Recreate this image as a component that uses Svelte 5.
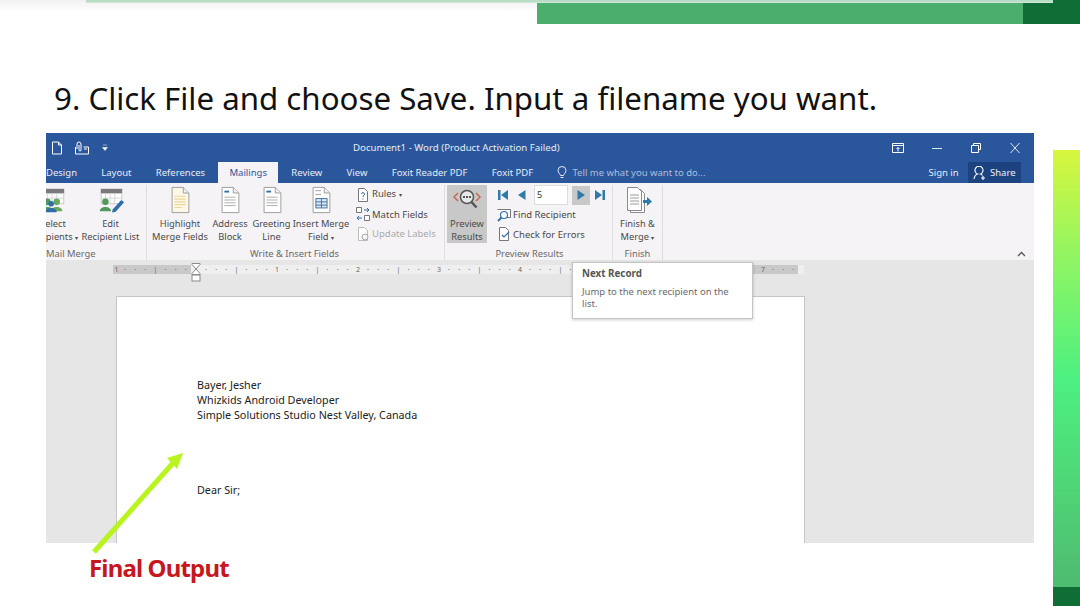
<script>
	const tabs = ['Design', 'Layout', 'References', 'Mailings', 'Review', 'View', 'Foxit Reader PDF', 'Foxit PDF'];
	// 81px to the inch, one cell per eighth; the tooltip hides cells 46 to 63
	const ruler = Array.from({ length: 68 }, (_, i) => {
		if (i === 0) return '1';
		if (i === 8 || (i >= 46 && i <= 63)) return '';
		if (i % 8 === 0) return String(i / 8 - 1);
		return i % 4 === 0 ? '|' : '·';
	});
</script>

{#snippet paper(kind)}
	<svg class="big-icon" viewBox="0 0 30 30" width="30" height="28">
		<path d="M6.5 1.5h12l6 6v21h-18z" fill={kind === 'highlight' ? '#fdf8e6' : '#fff'} stroke="#9a9a9a" />
		<path d="M18.5 1.5v6h6" fill="#f0f0f0" stroke="#9a9a9a" />
		{#if kind === 'highlight'}
			<path d="M9 11h12M9 14h12M9 17h12M9 20h12M9 23h8" stroke="#edd79c" stroke-width="1.2" />
		{:else if kind === 'merge'}
			<path d="M9 5h6M9 9h6" stroke="#9a9a9a" />
			<rect x="9.5" y="13.5" width="12" height="10" fill="#dbe7f4" stroke="#41719c" />
			<path d="M9.5 17h12M9.5 20.500h12M15.500 13.500v10" stroke="#41719c" />
		{:else}
			<path d="M9 6h5" stroke="#2f6ea8" stroke-width="2" />
			<path d="M9 12h12M9 15h12M9 18h12M9 21h12" stroke="#a9a9a9" />
		{/if}
	</svg>
{/snippet}

{#snippet people(edit)}
	<svg class="big-icon" viewBox="0 0 30 30" width="30" height="28">
		<rect x="4" y="3" width="23" height="5" fill="#7b7b7b" />
		<rect x="4.500" y="8" width="22" height="11" fill="#fff" stroke="#c9c9c9" />
		<path d="M9 8v11M14 8v11M19 8v11M4 13h23" stroke="#d5d5d5" />
		<circle cx="9" cy="17" r="3.500" fill="#4f9a5a" />
		<path d="M3 27c0-6 12-6 12 0z" fill="#4f9a5a" />
		{#if edit}
			<path d="M17 25l9-10 3 2.500-9 10-4 1z" fill="#2f6ea8" />
		{:else}
			<circle cx="19" cy="17" r="3.500" fill="#6aaa5e" />
			<path d="M13 27c0-6 12-6 12 0z" fill="#6aaa5e" />
			<circle cx="13" cy="19" r="3" fill="#2f6ea8" />
			<path d="M7 28c0-6 12-6 12 0z" fill="#2f6ea8" />
		{/if}
	</svg>
{/snippet}

<div class="slide">
	<div class="deco">
		<div class="hairline"></div>
		<div class="bar-green"></div>
		<div class="bar-dark"></div>
	</div>

	<h1>9. Click File and choose Save. Input a filename you want.</h1>

	<div class="content">
		<div class="left">
			<div class="window">
				<div class="titlebar">
					<div class="qat">
						<svg viewBox="0 0 12 14" width="12" height="14"><path d="M1.500 1h6l3 3v9h-9zM7.500 1v3h3" fill="none" stroke="#fff" /></svg>
						<svg viewBox="0 0 16 14" width="16" height="14"><path d="M3 8V3a2 2 0 0 1 4 0v6a1 1 0 0 1-2 0V4M1.500 6v7h13V6h-5M10 8h3" fill="none" stroke="#fff" /></svg>
						<svg class="qat-more" viewBox="0 0 6 7" width="6" height="7"><path d="M1 1h4M0.500 3.500h5l-2.500 3z" fill="#fff" stroke="#fff" stroke-width="0.500" /></svg>
					</div>
					<div class="doc-title">Document1 - Word (Product Activation Failed)</div>
					<div class="win-controls">
						<svg viewBox="0 0 12 10" width="12" height="10"><path d="M.5.500h11v9H.5zM.5 2.500h11M6 4.500v4M4.500 6L6 4.500 7.500 6" fill="none" stroke="#fff" /></svg>
						<svg viewBox="0 0 12 10" width="12" height="10"><path d="M1 5.500h10" stroke="#dfe7f3" /></svg>
						<svg viewBox="0 0 12 10" width="12" height="10"><path d="M3.500 2.500V.500h7v6h-2M1.500 2.500h7v7h-7z" fill="none" stroke="#fff" /></svg>
						<svg viewBox="0 0 12 10" width="12" height="10"><path d="M1.500 0l9 10M10.500 0l-9 10" stroke="#dfe7f3" /></svg>
					</div>
				</div>

				<div class="tabbar">
					{#each tabs as tab}
						<span class="tab" class:active={tab === 'Mailings'}>{tab}</span>
					{/each}
					<span class="tell">
						<svg viewBox="0 0 10 13" width="10" height="13"><path d="M3.500 9.500C3 7.500 1 7 1 4.500a4 4 0 0 1 8 0C9 7 7 7.500 6.500 9.500zM3.500 11.500h3" fill="none" stroke="#e4ebf6" /></svg>
						Tell me what you want to do...
					</span>
					<span class="signin">Sign in</span>
					<span class="share">
						<svg viewBox="0 0 14 14" width="14" height="14"><path d="M1 13c.5-3 2-4.500 3.500-5a4 4 0 1 1 3 0c.8.300 1.500.800 2 1.500M10 10v4M8 12h4" fill="none" stroke="#fff" stroke-width="1.100" /></svg>
						Share
					</span>
				</div>

				<div class="ribbon">
					<section class="group mail">
						<div class="group-body">
							<div class="big select">
								{@render people(false)}
								<span>Select<br />Recipients <i>▾</i></span>
							</div>
							<div class="big w-edit">
								{@render people(true)}
								<span>Edit<br />Recipient List</span>
							</div>
						</div>
						<div class="group-label">Mail Merge</div>
					</section>

					<section class="group write">
						<div class="group-body">
							<div class="big w-58">
								{@render paper('highlight')}
								<span>Highlight<br />Merge Fields</span>
							</div>
							<div class="big w-42">
								{@render paper('address')}
								<span>Address<br />Block</span>
							</div>
							<div class="big w-41">
								{@render paper('greeting')}
								<span>Greeting<br />Line</span>
							</div>
							<div class="big w-58">
								{@render paper('merge')}
								<span>Insert Merge<br />Field <i>▾</i></span>
							</div>
							<div class="small-col rules">
								<div class="small">
									<svg viewBox="0 0 14 14" width="14" height="14"><path d="M2.500.500h6l3 3v10h-9z" fill="#fff" stroke="#777" /><path d="M5.500 6a1.500 1.500 0 1 1 2 1.500L7 9M7 10.500v1" fill="none" stroke="#2f6ea8" /></svg>
									<span>Rules <i>▾</i></span>
								</div>
								<div class="small">
									<svg viewBox="0 0 14 14" width="14" height="14"><path d="M.5.500h5v5h-5zM8.500 8.500h5v5h-5z" fill="#fff" stroke="#777" /><path d="M8 3h5M11 1l2 2-2 2M6 11H1M3 9l-2 2 2 2" fill="none" stroke="#2f6ea8" /></svg>
									<span>Match Fields</span>
								</div>
								<div class="small disabled">
									<svg viewBox="0 0 14 14" width="14" height="14"><path d="M2.500.500h6l3 3v10h-9z" fill="#fff" stroke="#bbb" /><circle cx="9" cy="10" r="3" fill="#f6f3f6" stroke="#aaa" /></svg>
									<span>Update Labels</span>
								</div>
							</div>
						</div>
						<div class="group-label write-label">Write &amp; Insert Fields</div>
					</section>

					<section class="group preview">
						<div class="group-body">
							<div class="big preview-btn">
								<svg class="big-icon" viewBox="0 0 30 28" width="32" height="28">
									<path d="M6 7l-4 4 4 4M24 7l4 4-4 4" stroke="#c8674a" stroke-width="1.500" fill="none" />
									<circle cx="15" cy="11" r="6.500" fill="#e8e8e8" stroke="#555" stroke-width="1.500" />
									<path d="M19.500 16l5 5.500" stroke="#555" stroke-width="2.500" />
									<path d="M11 11h8" stroke="#555" stroke-width="2" stroke-dasharray="2 1" />
								</svg>
								<span>Preview<br />Results</span>
							</div>
							<div class="small-col nav-col">
								<div class="nav-row">
									<svg viewBox="0 0 12 12" width="12" height="12"><path d="M1 1h2.500v10H1zM11 1v10L4 6z" fill="#2f7ba8" /></svg>
									<svg viewBox="0 0 9 12" width="9" height="12"><path d="M8.500 1v10L1 6z" fill="#2f7ba8" /></svg>
									<span class="record">5</span>
									<span class="next-box"><svg viewBox="0 0 9 12" width="9" height="12"><path d="M.5 1v10L8 6z" fill="#2f7ba8" /></svg></span>
									<svg viewBox="0 0 12 12" width="12" height="12"><path d="M11 1H8.500v10H11zM1 1v10l7-5z" fill="#2f7ba8" /></svg>
								</div>
								<div class="small">
									<svg viewBox="0 0 14 14" width="14" height="14"><path d="M.5 1.500h13v8H8" fill="#fff" stroke="#777" /><circle cx="7" cy="7" r="3.500" fill="#fff" stroke="#2f6ea8" stroke-width="1.200" /><path d="M4.500 9.500L1 13" stroke="#2f6ea8" stroke-width="1.800" /></svg>
									<span>Find Recipient</span>
								</div>
								<div class="small">
									<svg viewBox="0 0 14 14" width="14" height="14"><path d="M2.500.500h6l3 3v10h-9z" fill="#fff" stroke="#777" /><path d="M5 8l2 2 5-5" fill="none" stroke="#2f6ea8" stroke-width="1.200" /></svg>
									<span>Check for Errors</span>
								</div>
							</div>
						</div>
						<div class="group-label">Preview Results</div>
					</section>

					<section class="group finish">
						<div class="group-body">
							<div class="big w-49">
								<svg class="big-icon" viewBox="0 0 30 28" width="30" height="28">
									<path d="M7.500 3.500h10l4 4v19h-14z" fill="#fff" stroke="#8a8a8a" />
									<path d="M4.500 1.500h10l4 4v19h-14z" fill="#fff" stroke="#8a8a8a" />
									<path d="M7 9h9M7 12h9M7 15h9M7 18h9" stroke="#9a9a9a" />
									<path d="M20 14h4v-3l5 4.500-5 4.500v-3h-4z" fill="#2f7ba8" />
								</svg>
								<span>Finish &amp;<br />Merge <i>▾</i></span>
							</div>
						</div>
						<div class="group-label">Finish</div>
					</section>

					<svg class="collapse" viewBox="0 0 9 6" width="9" height="6"><path d="M1 5l3.500-3.500L8 5" fill="none" stroke="#555" stroke-width="1.300" /></svg>
				</div>

				<div class="workspace">
					<div class="ruler">
						{#each ruler as mark, i}
							<span class="mark" class:shaded={i < 8 || i > 45}>{mark}</span>
						{/each}
					</div>
					<div class="page">
						<p>Bayer, Jesher</p>
						<p>Whizkids Android Developer</p>
						<p>Simple Solutions Studio Nest Valley, Canada</p>
						<p class="salutation">Dear Sir;</p>
					</div>

					<svg class="indent" viewBox="0 0 10 19" width="10" height="19">
						<path d="M1 .5h8v1L5 6l-4-4.500zM1 11.500v-1L5 6l4 4.500v1z" fill="#fff" stroke="#8a8a8a" />
						<rect x="1" y="12" width="8" height="6" fill="#fff" stroke="#8a8a8a" />
					</svg>

					<div class="tooltip">
						<strong>Next Record</strong>
						<p>Jump to the next recipient on the list.</p>
					</div>
				</div>
			</div>

			<div class="caption">Final Output</div>
		</div>

		<div class="sidebar"></div>
	</div>

	<svg class="arrow" viewBox="0 0 100 110" width="100" height="110">
		<path d="M5 103L84 14" stroke="#b9f41f" stroke-width="5" />
		<path d="M94 4L78 9 88 20z" fill="#b9f41f" />
	</svg>
</div>

<style>
	:global(body) {
		margin: 0;
		background: #fff;
	}
	.slide {
		position: relative;
		width: 1080px;
		height: 606px;
		overflow: hidden;
		background: #fff;
		font-family: 'Noto Sans', sans-serif;
	}
	.deco {
		position: relative;
		display: flex;
		justify-content: flex-end;
		height: 24px;
		background: linear-gradient(#f1f1f1, #fff 12px);
	}
	.hairline {
		position: absolute;
		left: 86px;
		top: 0;
		width: 967px;
		height: 2px;
		background: #b9dcc4;
		border-bottom: 1px solid #cfe7d6;
	}
	.bar-green {
		width: 486px;
		margin-top: 3px;
		background: #4bae6d;
	}
	.bar-dark {
		width: 57px;
		background: #0f6e35;
	}
	h1 {
		margin: 52px 0 0 54px;
		font-size: 31.250px;
		line-height: 44px;
		font-weight: 400;
		color: #111;
		white-space: nowrap;
	}
	.content {
		display: flex;
		margin-top: 13px;
	}
	.left {
		margin-left: 46px;
		width: 988px;
	}
	.sidebar {
		width: 27px;
		height: 456px;
		margin: 17px 0 0 19px;
		background: linear-gradient(
			#0f6e35 0 0
		) bottom / 100% 19px no-repeat, linear-gradient(#d8f63e 0%, #8ff563 24%, #4df081 50%, #4fd877 72%, #4fb56f 100%);
	}
	.window {
		height: 410px;
		display: flex;
		flex-direction: column;
		background: #e6e6e6;
	}
	.titlebar {
		display: flex;
		align-items: center;
		height: 29px;
		background: #2a569c;
		color: #f2f5fa;
	}
	.qat {
		display: flex;
		align-items: center;
		gap: 11px;
		width: 302px;
		margin-left: 5px;
	}
	.qat-more {
		margin-left: 1px;
	}
	.doc-title {
		font-size: 9.700px;
		color: #e4ebf6;
		white-space: nowrap;
	}
	.win-controls {
		display: flex;
		gap: 27px;
		margin-left: auto;
		margin-right: 13px;
		align-items: center;
	}
	.tabbar {
		display: flex;
		align-items: center;
		gap: 24.300px;
		height: 21px;
		background: #2a569c;
		font-size: 9.500px;
		color: #e8edf6;
	}
	.tab {
		white-space: nowrap;
	}
	.tab.active {
		align-self: stretch;
		display: flex;
		align-items: center;
		padding: 0 11px;
		margin: 0 -11px;
		background: #f6f3f6;
		color: #2a569c;
	}
	.tell {
		display: flex;
		align-items: center;
		gap: 5px;
		color: #aebfda;
		white-space: nowrap;
	}
	.signin {
		margin-left: auto;
		margin-right: -15px;
		white-space: nowrap;
	}
	.share {
		align-self: stretch;
		display: flex;
		align-items: center;
		gap: 3px;
		width: 53px;
		box-sizing: border-box;
		padding-left: 5px;
		margin-right: 13px;
		background: #1c4380;
		color: #eef2f8;
		white-space: nowrap;
	}
	.ribbon {
		display: flex;
		height: 77px;
		flex: none;
		overflow: hidden;
		background: #f6f3f6;
		font-size: 9.500px;
		line-height: 13px;
		color: #4a4a4a;
	}
	.group {
		display: flex;
		flex-direction: column;
		box-sizing: border-box;
		border-right: 1px solid #e0dde0;
		margin-top: 2px;
	}
	.group-body {
		flex: 1;
		display: flex;
		min-height: 0;
	}
	.group-label {
		height: 14px;
		text-align: center;
		font-size: 9.400px;
		line-height: 15px;
		color: #6a6a6a;
	}
	.write-label {
		padding-right: 6px;
	}
	.mail {
		width: 101px;
	}
	.mail .group-label {
		text-align: left;
	}
	.write {
		width: 298px;
		padding-left: 4px;
	}
	.preview {
		width: 168px;
		padding-left: 2px;
	}
	.finish {
		width: 50px;
	}
	.big {
		display: flex;
		flex-direction: column;
		align-items: center;
		flex: none;
		font-size: 9.300px;
		text-align: center;
		white-space: nowrap;
	}
	.big span {
		margin-top: 3px;
	}
	.big i,
	.small i {
		font-style: normal;
		font-size: 6px;
	}
	.big-icon {
		flex: none;
		margin-top: 1px;
	}
	.select {
		width: 52px;
		margin-left: -19px;
	}
	.w-edit {
		width: 63px;
	}
	.w-58 {
		width: 58px;
	}
	.w-42 {
		width: 42px;
	}
	.w-41 {
		width: 41px;
	}
	.w-49 {
		width: 49px;
	}
	.preview-btn {
		width: 40px;
		height: 58px;
		background: #c8c8c8;
	}
	.small-col {
		display: flex;
		flex-direction: column;
		white-space: nowrap;
	}
	.rules {
		margin-left: 6px;
	}
	.nav-col {
		margin-left: 10px;
	}
	.small {
		display: flex;
		align-items: center;
		gap: 2px;
		height: 19.500px;
	}
	.disabled {
		color: #aaa;
	}
	.nav-row {
		display: flex;
		align-items: center;
		height: 20px;
		width: 109px;
		gap: 8px;
	}
	.record {
		width: 34px;
		height: 20px;
		box-sizing: border-box;
		border: 1px solid #ddd;
		margin-right: -4px;
		padding-left: 2px;
		background: #fff;
		line-height: 18px;
		font-size: 9px;
		color: #333;
	}
	.next-box {
		display: flex;
		align-items: center;
		justify-content: center;
		width: 18px;
		height: 19px;
		margin-right: -4px;
		background: #c8c8c8;
	}
	.collapse {
		margin: auto 8px 3px auto;
	}
	.workspace {
		position: relative;
		flex: 1;
		min-height: 0;
		overflow: hidden;
	}
	.ruler {
		display: flex;
		width: 691px;
		height: 9px;
		margin: 5px 0 0 67px;
		overflow: hidden;
		background: #efefef;
	}
	.mark {
		flex: 0 0 10.125px;
		text-align: center;
		font-size: 7px;
		line-height: 9px;
		color: #666;
	}
	.mark:first-child {
		flex-basis: 7px;
	}
	.mark.shaded {
		background: #c9c9c9;
	}
	.page {
		box-sizing: border-box;
		width: 689px;
		height: 300px;
		margin: 22px 0 0 70px;
		padding: 81px 0 0 80px;
		background: #fff;
		border: 1px solid #c6c6c6;
		border-bottom: 0;
		font-size: 10.750px;
		line-height: 15px;
		color: #222;
	}
	.page p {
		margin: 0;
	}
	.page .salutation {
		margin-top: 60px;
	}
	.indent {
		position: absolute;
		left: 145px;
		top: 3px;
	}
	.tooltip {
		position: absolute;
		left: 526px;
		top: 2px;
		box-sizing: border-box;
		width: 181px;
		height: 57px;
		padding: 5px 18px 0 9px;
		background: #fff;
		border: 1px solid #c4c4c4;
		box-shadow: 0 1px 3px rgba(0, 0, 0, 0.2);
		font-size: 9.500px;
		line-height: 12px;
		color: #6a6a6a;
	}
	.tooltip strong {
		display: block;
		margin-bottom: 6px;
		font-size: 9.800px;
		color: #555;
	}
	.tooltip p {
		margin: 0;
	}
	.caption {
		margin: 10px 0 0 43px;
		font-size: 24px;
		line-height: 30px;
		letter-spacing: -0.850px;
		font-weight: 700;
		color: #c8161d;
	}
	.arrow {
		position: absolute;
		left: 89px;
		top: 449px;
	}
</style>
